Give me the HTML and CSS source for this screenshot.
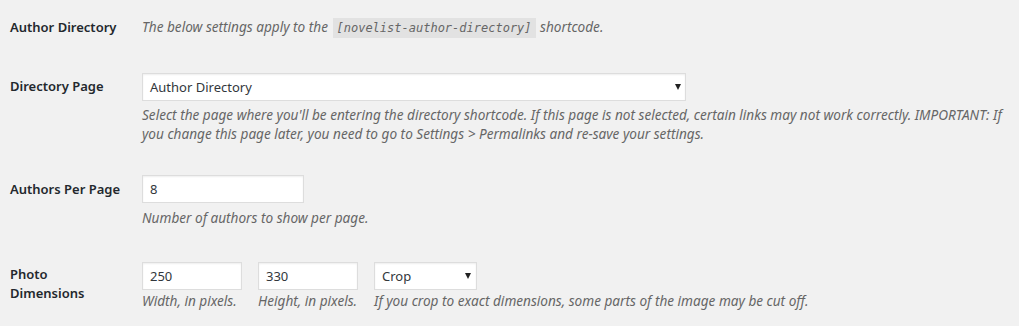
FILE: index.html
```html
<!DOCTYPE html>
<html>
<head>
<meta charset="utf-8">
<link rel="stylesheet" href="styles.css">
</head>
<body>
<div class="form">
  <div class="row row-intro">
    <div class="label">Author Directory</div>
    <div class="field">
      <p class="description">The below settings apply to the <code>[novelist-author-directory]</code> shortcode.</p>
    </div>
  </div>

  <div class="row row-page">
    <div class="label label-mid">Directory Page</div>
    <div class="field">
      <div class="select select-wide"><span>Author Directory</span><i class="arrow"></i></div>
      <p class="description">Select the page where you'll be entering the directory shortcode. If this page is not selected, certain links may not work correctly. IMPORTANT: If you change this page later, you need to go to Settings &gt; Permalinks and re-save your settings.</p>
    </div>
  </div>

  <div class="row row-per">
    <div class="label label-mid">Authors Per Page</div>
    <div class="field">
      <div class="input input-reg">8</div>
      <p class="description">Number of authors to show per page.</p>
    </div>
  </div>

  <div class="row row-photo">
    <div class="label label-two">Photo<br>Dimensions</div>
    <div class="field field-inline">
      <div class="group">
        <div class="input input-small">250</div>
        <p class="description">Width, in pixels.</p>
      </div>
      <div class="group">
        <div class="input input-small">330</div>
        <p class="description">Height, in pixels.</p>
      </div>
      <div class="group">
        <div class="select select-small"><span>Crop</span><i class="arrow"></i></div>
        <p class="description">If you crop to exact dimensions, some parts of the image may be cut off.</p>
      </div>
    </div>
  </div>
</div>
</body>
</html>
```

FILE: styles.css
```css
html, body {
  margin: 0;
  padding: 0;
  background: #f1f1f1;
}

body {
  font-family: "Noto Sans", "Open Sans", sans-serif;
  font-size: 13px;
  color: #23282d;
  width: 1019px;
  height: 326px;
  overflow: hidden;
}

.form {
  padding: 0 10px;
}

.row {
  display: grid;
  grid-template-columns: 132px 1fr;
}

.label {
  font-weight: 600;
  font-size: 13px;
  line-height: 18px;
  color: #23282d;
}

.row-intro {
  padding-top: 18px;
}

.row-page {
  padding-top: 36px;
}

.row-per {
  padding-top: 32px;
}

.row-photo {
  padding-top: 35px;
}

.label-mid {
  padding-top: 4px;
}

.row-per .label-mid {
  padding-top: 5px;
}

.label-two {
  padding-top: 3px;
  line-height: 19px;
}

.description {
  margin: 0;
  font-style: italic;
  font-size: 13.6px;
  line-height: 19px;
  color: #666;
}

.row-intro .description {
  line-height: 18px;
}

code {
  font-family: "DejaVu Sans Mono", "Liberation Mono", monospace;
  font-size: 12px;
  font-style: italic;
  background: #e2e2e2;
  color: #666;
  padding: 3px 4px 3px;
  margin: 0 1px;
}

.select,
.input {
  box-sizing: border-box;
  height: 28px;
  background: #fff;
  border: 1px solid #ddd;
  box-shadow: inset 0 1px 2px rgba(0, 0, 0, 0.07);
  color: #32373c;
  font-size: 13px;
  line-height: 26px;
  padding: 0 7px;
  display: flex;
  align-items: center;
  justify-content: space-between;
}

.select-wide {
  width: 544px;
  padding-right: 4px;
}

.select-small {
  width: 103px;
  padding-right: 5px;
}

.input-reg {
  width: 162px;
}

.input-small {
  width: 100px;
}

.arrow {
  width: 0;
  height: 0;
  border-left: 3.5px solid transparent;
  border-right: 3.5px solid transparent;
  border-top: 6px solid #222;
}

.row-page .description {
  margin-top: 4px;
  width: 870px;
}

.row-per .description {
  margin-top: 5px;
}

.field-inline {
  display: flex;
  gap: 16px;
}

.row-photo .description {
  margin-top: 1px;
}
```
